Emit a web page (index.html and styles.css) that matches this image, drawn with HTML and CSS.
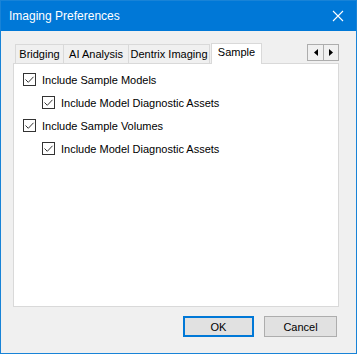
FILE: index.html
```html
<!DOCTYPE html>
<html lang="en">
<head>
    <meta charset="UTF-8">
    <title>Imaging Preferences</title>
    <link rel="stylesheet" href="styles.css">
</head>
<body>
    <div class="window">
        <div class="titlebar">
            <span class="title">Imaging Preferences</span>
            <svg class="close" width="12" height="12" viewBox="0 0 12 12">
                <path d="M1 1 L11 11 M11 1 L1 11" stroke="#fff" stroke-width="1.1"/>
            </svg>
        </div>

        <div class="content">
            <div class="tabs">
                <div class="tab tab-bridging">Bridging</div>
                <div class="tab tab-ai">AI Analysis</div>
                <div class="tab tab-dentrix">Dentrix Imaging</div>
                <div class="tab tab-sample active">Sample</div>
                <div class="scroller">
                    <div class="arrow"><svg width="4" height="7" viewBox="0 0 4 7"><path d="M4 0 L0 3.5 L4 7 Z" fill="#000"/></svg></div>
                    <div class="arrow"><svg width="4" height="7" viewBox="0 0 4 7"><path d="M0 0 L4 3.5 L0 7 Z" fill="#000"/></svg></div>
                </div>
            </div>

            <div class="panel">
                <label class="check">
                    <span class="box"><svg width="11" height="11" viewBox="0 0 11 11"><path d="M1.5 5.5 L4.3 8.3 L9.5 2.8" fill="none" stroke="#333" stroke-width="1"/></svg></span>
                    Include Sample Models
                </label>
                <label class="check sub">
                    <span class="box"><svg width="11" height="11" viewBox="0 0 11 11"><path d="M1.5 5.5 L4.3 8.3 L9.5 2.8" fill="none" stroke="#333" stroke-width="1"/></svg></span>
                    Include Model Diagnostic Assets
                </label>
                <label class="check">
                    <span class="box"><svg width="11" height="11" viewBox="0 0 11 11"><path d="M1.5 5.5 L4.3 8.3 L9.5 2.8" fill="none" stroke="#333" stroke-width="1"/></svg></span>
                    Include Sample Volumes
                </label>
                <label class="check sub">
                    <span class="box"><svg width="11" height="11" viewBox="0 0 11 11"><path d="M1.5 5.5 L4.3 8.3 L9.5 2.8" fill="none" stroke="#333" stroke-width="1"/></svg></span>
                    Include Model Diagnostic Assets
                </label>
            </div>

            <div class="footer">
                <button class="btn default">OK</button>
                <button class="btn">Cancel</button>
            </div>
        </div>
    </div>
</body>
</html>
```

FILE: styles.css
```css
* {
    margin: 0;
    padding: 0;
    box-sizing: border-box;
}
body {
    font-family: "Liberation Sans", Arial, sans-serif;
    font-size: 11px;
    color: #000;
    background: #fff;
}
.window {
    width: 357px;
    height: 354px;
    border: 1px solid #1883d7;
    background: #f0f0f0;
    display: flex;
    flex-direction: column;
}
.titlebar {
    height: 30px;
    background: #0078d7;
    color: #fff;
    display: flex;
    align-items: center;
    justify-content: space-between;
    padding: 0 12px 0 8px;
}
.title {
    font-size: 12px;
}
.content {
    padding: 12px 17px 0 12px;
    display: flex;
    flex-direction: column;
}
.tabs {
    display: flex;
    align-items: flex-end;
    height: 20px;
    padding-left: 2px;
    position: relative;
    z-index: 1;
}
.tab {
    height: 19px;
    line-height: 18px;
    text-align: center;
    white-space: nowrap;
    border: 1px solid #d9d9d9;
    border-bottom: none;
    margin-right: -1px;
    background: #f0f0f0;
}
.tab-bridging { width: 49px; }
.tab-ai { width: 66px; }
.tab-dentrix { width: 82px; }
.tab-sample { width: 51px; }
.tab.active {
    line-height: 17px;
    background: #fff;
    margin-left: 2px;
    margin-bottom: -1px;
    height: 21px;
}
.scroller {
    margin-left: auto;
    display: flex;
    align-self: flex-start;
    margin-top: 1px;
    border: 1px solid #adadad;
}
.arrow {
    width: 15px;
    height: 15px;
    display: flex;
    align-items: center;
    justify-content: center;
    background: #f0f0f0;
}
.arrow + .arrow {
    border-left: 1px solid #adadad;
}
.panel {
    height: 244px;
    background: #fff;
    border: 1px solid #d9d9d9;
    padding: 9px 0 0 9px;
    display: flex;
    flex-direction: column;
    gap: 10px;
}
.check {
    display: flex;
    align-items: center;
    gap: 6px;
    height: 13px;
}
.check.sub {
    margin-left: 19px;
}
.box {
    width: 13px;
    height: 13px;
    border: 1px solid #333;
    display: flex;
    align-items: center;
    justify-content: center;
    background: #fff;
}
.footer {
    display: flex;
    justify-content: flex-end;
    gap: 10px;
    margin-top: 9px;
    margin-right: 2px;
}
.btn {
    font-family: inherit;
    font-size: 11px;
    width: 73px;
    height: 21px;
    background: #e1e1e1;
    border: 1px solid #adadad;
    color: #000;
}
.btn.default {
    width: 71px;
    border: 2px solid #0078d7;
}
```
